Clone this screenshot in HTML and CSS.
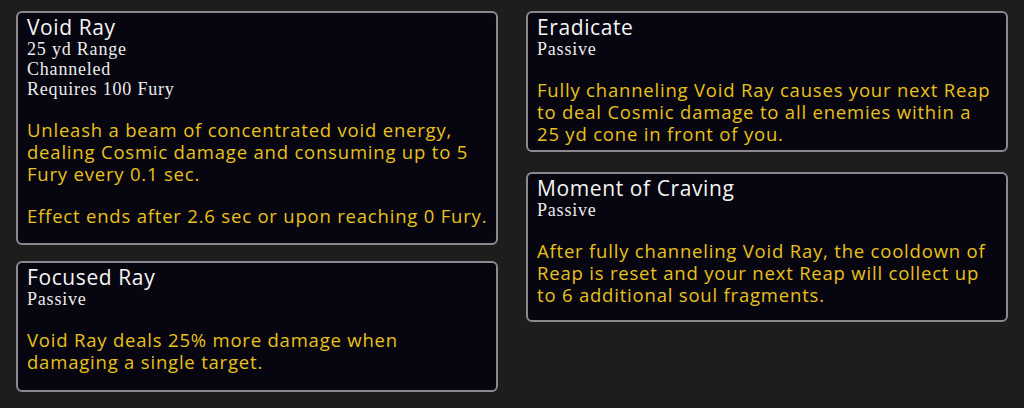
FILE: index.html
```html
<!DOCTYPE html>
<html>
<head>
<meta charset="utf-8">
<link rel="stylesheet" href="styles.css">
</head>
<body>
<div class="board">
  <div class="col col-left">
    <div class="card">
      <div class="title">Void Ray</div>
      <div class="sub">25 yd Range</div>
      <div class="sub">Channeled</div>
      <div class="sub">Requires 100 Fury</div>
      <p class="desc">Unleash a beam of concentrated void energy, dealing Cosmic damage and consuming up to 5 Fury every 0.1 sec.</p>
      <p class="desc">Effect ends after 2.6 sec or upon reaching 0 Fury.</p>
    </div>
    <div class="card card-loose">
      <div class="title">Focused Ray</div>
      <div class="sub">Passive</div>
      <p class="desc">Void Ray deals 25% more damage when damaging a single target.</p>
    </div>
  </div>
  <div class="col col-right">
    <div class="card card-tight">
      <div class="title">Eradicate</div>
      <div class="sub">Passive</div>
      <p class="desc">Fully channeling Void Ray causes your next Reap to deal Cosmic damage to all enemies within a 25 yd cone in front of you.</p>
    </div>
    <div class="card card-mid">
      <div class="title">Moment of Craving</div>
      <div class="sub">Passive</div>
      <p class="desc">After fully channeling Void Ray, the cooldown of Reap is reset and your next Reap will collect up to 6 additional soul fragments.</p>
    </div>
  </div>
</div>
</body>
</html>
```

FILE: styles.css
```css
html, body {
  margin: 0;
  padding: 0;
  background: #1f1c1d;
}
.board {
  display: flex;
  align-items: flex-start;
  gap: 28px;
  padding: 11px 16px;
}
.col {
  width: 482px;
  display: flex;
  flex-direction: column;
}
.col-left { gap: 16px; }
.col-right { gap: 20px; }
.card {
  background: #07050f;
  border: 2px solid #8b888e;
  border-radius: 6px;
  padding: 2px 6px 16px 9px;
}
.card-loose { padding-bottom: 17px; }
.card-mid { padding-bottom: 14px; }
.card-tight { padding-bottom: 5px; padding-right: 12px; }
.title {
  font-family: "Open Sans", sans-serif;
  font-size: 21px;
  line-height: 24px;
  letter-spacing: 0.6px;
  color: #f4f4f4;
}
.sub {
  font-family: "Liberation Serif", serif;
  font-size: 18px;
  line-height: 20px;
  letter-spacing: 0.8px;
  color: #ececec;
}
.desc {
  margin: 20px 0 0;
  font-family: "Open Sans", sans-serif;
  font-size: 18.5px;
  line-height: 22px;
  letter-spacing: 0.8px;
  color: #e8c11c;
}
```
